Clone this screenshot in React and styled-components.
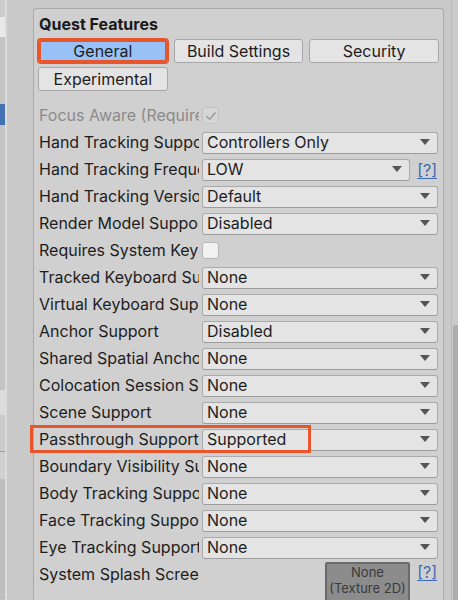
import React from 'react';
import styled, { createGlobalStyle } from 'styled-components';

const Global = createGlobalStyle`
  html, body { margin: 0; padding: 0; width: 458px; height: 600px; overflow: hidden; background: #c9c9c9; }
  body { font-family: Inter, "Noto Sans", "Liberation Sans", sans-serif; color: #1d1d1d; }
  * { box-sizing: border-box; }
`;

const Page = styled.div`
  display: flex;
  width: 458px;
  height: 600px;
  overflow: hidden;
`;

const Sidebar = styled.div`
  width: 7px;
  flex-shrink: 0;
  border-right: 2px solid #dbdbdb;
  background: #c4c4c4;
  display: flex;
  flex-direction: column;
`;

const SideItem = styled.div`
  flex-shrink: 0;
  height: ${p => p.$h}px;
  background: ${p => p.$bg};
  border-bottom: ${p => (p.$line ? '1px solid #9c9c9c' : 'none')};
`;

const Main = styled.div`
  flex-shrink: 0;
  padding: 8px 0 0 26px;
  display: flex;
`;

const Panel = styled.section`
  width: 411px;
  height: 640px;
  border: 1px solid #aaaaaa;
  border-bottom: none;
  border-radius: 4px 4px 0 0;
  background: #d0d0d0;
  padding: 5px 5px 0 5px;
`;

const Title = styled.h2`
  margin: 0;
  font-size: 16px;
  line-height: 20px;
  font-weight: 700;
  color: #1a1a1a;
`;

const Tabs = styled.div`
  display: grid;
  grid-template-columns: repeat(3, 1fr);
  gap: 4px 6px;
  margin: 5px -1px 0 -1px;
`;

const TabButton = styled.button`
  height: 24px;
  padding: 0 0 1px 0;
  border: 1px solid #a8a8a8;
  border-bottom-color: #999;
  border-radius: 3px;
  background: ${p => (p.$active ? '#98c1f7' : '#e4e4e4')};
  font-family: inherit;
  font-size: 16px;
  color: #1d1d1d;
  box-shadow: ${p => (p.$active ? '0 0 0 1px #e8552b, inset 0 0 0 2px #e8552b' : 'none')};
  border-color: ${p => (p.$active ? '#e8552b' : '#a8a8a8')};
`;

const Rows = styled.div`
  margin-top: 11px;
  display: flex;
  flex-direction: column;
`;

const Row = styled.div`
  position: relative;
  height: 27px;
  display: flex;
  align-items: ${p => (p.$top ? 'flex-start' : 'center')};
`;

const Label = styled.div`
  width: 160px;
  margin-right: 3px;
  flex-shrink: 0;
  overflow: hidden;
  white-space: nowrap;
  font-size: 16px;
  line-height: 27px;
  color: ${p => (p.$disabled ? '#8b8b8b' : '#1d1d1d')};
`;

const Dropdown = styled.div`
  width: ${p => p.$w || 236}px;
  height: 22px;
  flex-shrink: 0;
  display: flex;
  align-items: center;
  justify-content: space-between;
  padding: 0 7px 1px 4px;
  background: #e4e4e4;
  border: 1px solid #ababab;
  border-bottom-color: #9d9d9d;
  border-radius: 3px;
  font-size: 16px;
  line-height: 18px;
  color: #1d1d1d;
  white-space: nowrap;
`;

const Arrow = styled.svg`
  width: 10px;
  height: 6px;
  flex-shrink: 0;
`;

const Checkbox = styled.div`
  width: 17px;
  height: 17px;
  border: 1px solid ${p => (p.$disabled ? '#c2c2c2' : '#b6b6b6')};
  border-radius: 3px;
  background: ${p => (p.$disabled ? '#d6d6d6' : '#f1f1f1')};
  display: flex;
  align-items: center;
  justify-content: center;
`;

const Help = styled.span`
  margin-left: auto;
  margin-right: 1px;
  font-size: 16px;
  line-height: 22px;
  color: #3b69b3;
  text-decoration: underline;
  text-underline-offset: 2px;
`;

const TextureCell = styled.div`
  flex: 1;
  display: flex;
  align-items: flex-start;
  padding-top: 1px;
`;

const TextureField = styled.div`
  margin-left: 123px;
  width: 85px;
  height: 80px;
  flex-shrink: 0;
  background: #8c8c8c;
  border: 2px solid #6a6a6a;
  border-radius: 2px;
  text-align: center;
  font-size: 13px;
  line-height: 16px;
  padding-top: 0;
  color: #3a3a3a;
`;

const TextureHelp = styled(Help)`
  margin-top: -1px;
`;

const Highlight = styled.div`
  position: absolute;
  left: -9px;
  top: -1px;
  width: 281px;
  height: 28px;
  border: 3px solid #e8552b;
  pointer-events: none;
`;

const ScrollArea = styled.div`
  flex-shrink: 0;
  margin-left: 7px;
  width: 7px;
  border-left: 1px solid #b9b9b9;
  display: flex;
  flex-direction: column;
  align-items: flex-end;
`;

const ScrollThumb = styled.div`
  margin-top: 325px;
  width: 5px;
  flex: 1;
  background: #adadad;
  border-radius: 3px 0 0 0;
`;

const DownArrow = () => (
  <Arrow viewBox="0 0 10 6">
    <path d="M0 0 H10 L5 6 Z" fill="#555" />
  </Arrow>
);

const Select = ({ value, w }) => (
  <Dropdown $w={w}>
    <span>{value}</span>
    <DownArrow />
  </Dropdown>
);

const rows = [
  { label: 'Focus Aware (Required)', type: 'check', checked: true, disabled: true },
  { label: 'Hand Tracking Support', value: 'Controllers Only' },
  { label: 'Hand Tracking Frequency', value: 'LOW', help: true },
  { label: 'Hand Tracking Version', value: 'Default' },
  { label: 'Render Model Support', value: 'Disabled' },
  { label: 'Requires System Keyboard', type: 'check' },
  { label: 'Tracked Keyboard Support', value: 'None' },
  { label: 'Virtual Keyboard Support', value: 'None' },
  { label: 'Anchor Support', value: 'Disabled' },
  { label: 'Shared Spatial Anchor Support', value: 'None' },
  { label: 'Colocation Session Support', value: 'None' },
  { label: 'Scene Support', value: 'None' },
  { label: 'Passthrough Support', value: 'Supported', highlight: true },
  { label: 'Boundary Visibility Support', value: 'None' },
  { label: 'Body Tracking Support', value: 'None' },
  { label: 'Face Tracking Support', value: 'None' },
  { label: 'Eye Tracking Support', value: 'None' },
];

export default function App() {
  return (
    <>
      <Global />
      <Page>
        <Sidebar>
          <SideItem $h={17} $bg="#cdcdcd" />
          <SideItem $h={20} $bg="#e9e9e9" />
          <SideItem $h={67} $bg="#c4c4c4" />
          <SideItem $h={21} $bg="#4471b3" />
          <SideItem $h={265} $bg="#c4c4c4" />
          <SideItem $h={25} $bg="#dcdcdc" />
          <SideItem $h={37} $bg="#cbcbcb" $line />
          <SideItem $h={27} $bg="#d0d0d0" />
          <SideItem $h={120} $bg="#bebebe" />
        </Sidebar>
        <Main>
          <Panel>
            <Title>Quest Features</Title>
            <Tabs>
              <TabButton $active>General</TabButton>
              <TabButton>Build Settings</TabButton>
              <TabButton>Security</TabButton>
              <TabButton>Experimental</TabButton>
            </Tabs>
            <Rows>
              {rows.map(r => (
                <Row key={r.label}>
                  <Label $disabled={r.disabled}>{r.label}</Label>
                  {r.type === 'check' ? (
                    <Checkbox $disabled={r.disabled}>
                      {r.checked && (
                        <svg width="12" height="10" viewBox="0 0 12 10">
                          <path d="M1.5 5.2 L4.6 8.2 L10.5 1.5" fill="none" stroke="#9b9b9b" strokeWidth="1.6" />
                        </svg>
                      )}
                    </Checkbox>
                  ) : r.help ? (
                    <>
                      <Select value={r.value} w={208} />
                      <Help>[?]</Help>
                    </>
                  ) : (
                    <Select value={r.value} />
                  )}
                  {r.highlight && <Highlight />}
                </Row>
              ))}
              <Row $top>
                <Label>System Splash Screen</Label>
                <TextureCell>
                  <TextureField>
                    None
                    <br />
                    (Texture 2D)
                  </TextureField>
                  <TextureHelp>[?]</TextureHelp>
                </TextureCell>
              </Row>
            </Rows>
          </Panel>
        </Main>
        <ScrollArea>
          <ScrollThumb />
        </ScrollArea>
      </Page>
    </>
  );
}
